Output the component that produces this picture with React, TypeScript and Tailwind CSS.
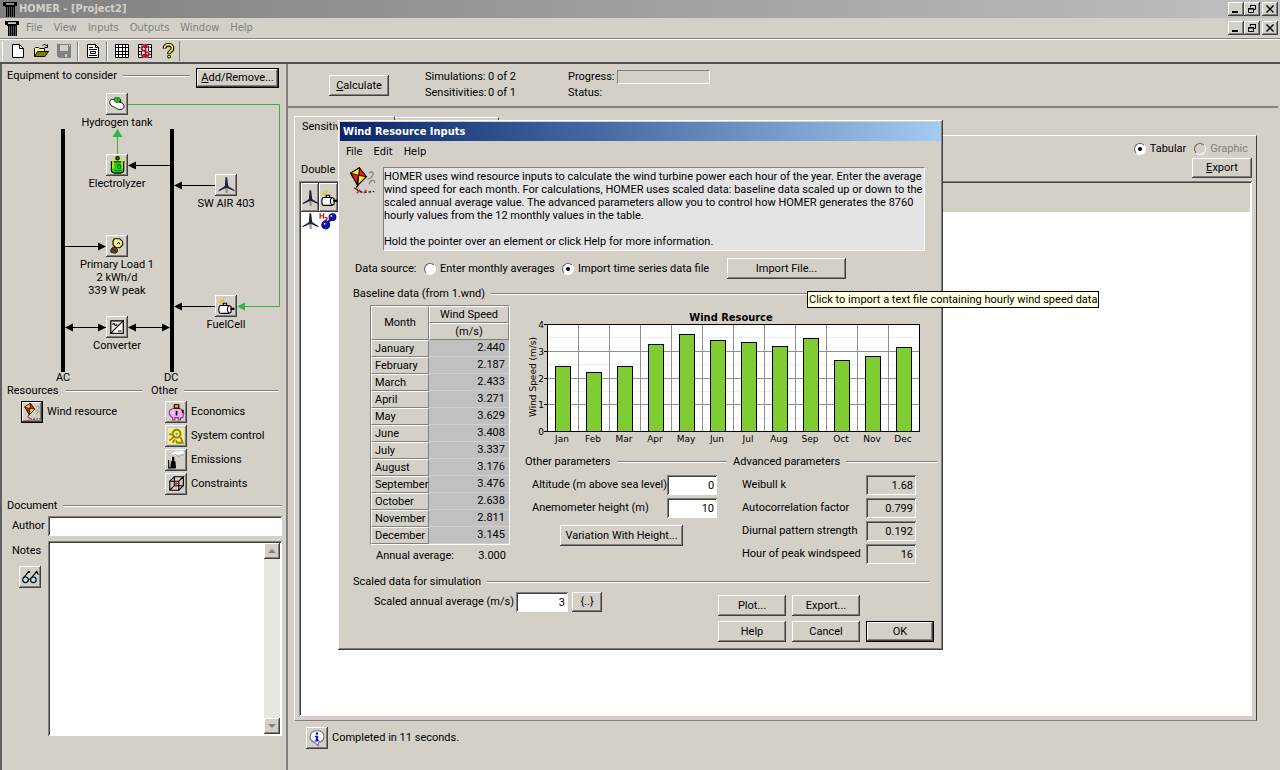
import type { ReactNode } from 'react';
import { clsx } from 'clsx';

const RAISED = 'bg-[#d4d0c8] shadow-[inset_-1px_-1px_#404040,inset_1px_1px_#ffffff,inset_-2px_-2px_#808080]';
const SUNKEN = 'shadow-[inset_1px_1px_#808080,inset_-1px_-1px_#ffffff,inset_2px_2px_#404040]';

const MONTHS = [
  { name: 'January', speed: '2.440' },
  { name: 'February', speed: '2.187' },
  { name: 'March', speed: '2.433' },
  { name: 'April', speed: '3.271' },
  { name: 'May', speed: '3.629' },
  { name: 'June', speed: '3.408' },
  { name: 'July', speed: '3.337' },
  { name: 'August', speed: '3.176' },
  { name: 'September', speed: '3.476' },
  { name: 'October', speed: '2.638' },
  { name: 'November', speed: '2.811' },
  { name: 'December', speed: '3.145' },
];

const ADVANCED = [
  { id: 'weibull', label: 'Weibull k', value: '1.68' },
  { id: 'autocorrelation', label: 'Autocorrelation factor', value: '0.799' },
  { id: 'diurnal', label: 'Diurnal pattern strength', value: '0.192' },
  { id: 'peak', label: 'Hour of peak windspeed', value: '16' },
];

/* ---------- icons ---------- */

function Icon({ size = 16, children }: { size?: number; children: ReactNode }) {
  return (
    <svg width={size} height={size} viewBox="0 0 16 16" fill="none" stroke="#000" className="shrink-0" aria-hidden="true">
      {children}
    </svg>
  );
}

function ColumnIcon() {
  return (
    <svg width="16" height="16" viewBox="0 0 16 16" shapeRendering="crispEdges" className="shrink-0" aria-hidden="true">
      <path d="M1 1h14v2H1zM1 3h3v2H1zM12 3h3v2h-3zM3 4h10v2H3zM4 6h1v10H4zM6 6h1v10H6zM8 6h1v10H8zM10 6h1v10h-1zM12 6h1v10h-1z" fill="#000" />
      <path d="M5 6h1v10H5zM7 6h1v10H7zM9 6h1v10H9zM11 6h1v10h-1z" fill="#555" />
      <path d="M4 2h8v1H4z" fill="#999" />
    </svg>
  );
}

function NewIcon() {
  return (
    <Icon>
      <path d="M2.5 1.5h7l4 4v9h-11z" fill="#fff" />
      <path d="M9.500 1.500v4h4" />
    </Icon>
  );
}

function OpenIcon() {
  return (
    <Icon>
      <path d="M1.500 13.500v-8l1-1h3l1 1h5v3" fill="#ffff99" />
      <path d="M1.500 13.500l3-5h11l-3.500 5z" fill="#808000" />
      <path d="M9.500 2.500c2-1.500 4-1 5 1.500M14.500 1.500v3h-3" />
    </Icon>
  );
}

function SaveIcon() {
  return (
    <Icon>
      <path d="M1 1h14v14H3l-2-2z" fill="#808080" stroke="none" />
      <path d="M4 2h8v6H4zM9 11h2v3H9z" fill="#d4d0c8" stroke="none" />
      <path d="M13 2h1v1h-1z" fill="#fff" stroke="none" />
    </Icon>
  );
}

function ReportIcon() {
  return (
    <Icon>
      <path d="M2.500 1.500h8l3 3v10h-11z" fill="#fff" />
      <path d="M10.500 1.500v3h3M4 4.500h4M4 6.500h8M4 12.500h8M5.500 8.500v2h5v-2z" />
    </Icon>
  );
}

function GridIcon({ money }: { money?: boolean }) {
  return (
    <Icon>
      <path d="M1.500 1.500h13v13h-13z" fill="#fff" />
      <path d="M4.500 1.500v13M8.500 1.500v13M11.500 1.500v13M1.500 4.500h13M1.500 8.500h13M1.500 11.500h13" />
      {money && (
        <>
          <path d="M12 5C11 2 4.500 2 4.500 5.500S12 8 12 11s-7 3.500-8 0" stroke="#fff" strokeWidth="2.600" />
          <path d="M12 5C11 2 4.500 2 4.500 5.500S12 8 12 11s-7 3.500-8 0M8.500 1v14" stroke="#b0102c" strokeWidth="1.800" />
        </>
      )}
    </Icon>
  );
}

function HelpIcon() {
  return (
    <Icon>
      <path d="M4.500 5.500c0-5 8-5 8 0 0 2.500-3.500 2.500-3.500 5.500" strokeWidth="3.800" />
      <path d="M4.500 5c0-4.500 8-4.500 8 .5 0 2.500-3.500 2.500-3.500 5" stroke="#f4ec3a" strokeWidth="1.700" />
      <circle cx="9" cy="13.500" r="1.500" fill="#f4ec3a" />
    </Icon>
  );
}

function TankIcon() {
  return (
    <Icon size={18}>
      <path d="M1.500 6.500c0-3 3-3 5-2l6 2.500c3 2 2 6-1.500 6-3 0-4-2-6-2.500s-3.500-2-3.500-4z" fill="#fff" strokeWidth=".8" />
      <path d="M6 2.500h4l1.500 2-2 2H7L5.500 5z" fill="#16c22a" stroke="#0a5c14" strokeWidth=".8" />
      <path d="M10 6.500l1.500-1.500" strokeWidth="1.200" />
    </Icon>
  );
}

function ElectrolyzerIcon() {
  return (
    <Icon size={18}>
      <path d="M3 5v8c0 3 11 3 11 0V5z" fill="#1fd326" />
      <path d="M3 5h11" stroke="#067c10" />
      <path d="M4.500 11V4c0-2 2-2 3-1M12.500 11V4c0-2-2-2-3-1" stroke="#e8dc1e" strokeWidth="1.400" />
      <circle cx="8.500" cy="2" r="1.500" fill="#13a81d" />
      <circle cx="10" cy="9.500" r="1.600" stroke="#055e0c" />
      <path d="M6 13h6" stroke="#067c10" />
    </Icon>
  );
}

function TurbineIcon() {
  return (
    <Icon size={18}>
      <path d="M8.500 9v6" stroke="#909090" strokeWidth="2" />
      <path d="M7.500 1h1.500l1 8h-3zM8 8.500l-6.500 4v1L8.500 10.500zM9 8.500l6.500 4v1L8.500 10.500z" fill="#1b2440" stroke="none" />
      <circle cx="8.500" cy="9" r="1.500" fill="#222" stroke="none" />
    </Icon>
  );
}

function BulbIcon() {
  return (
    <Icon size={18}>
      <path d="M5.500 1.500h5l2.500 2.500v3l-2.500 2.500H7L4.500 7V3.500z" fill="#fff36a" />
      <path d="M6.500 3.500l1.500-1" stroke="#fff" />
      <path d="M5 8.500l3.500 2.500v2l-2 1.500-4-1V11z" fill="#7a4a20" strokeWidth=".7" />
      <path d="M3.500 10.500l4 2.500M8 6.500l1.500-2 1 2" strokeWidth=".8" />
    </Icon>
  );
}

function GeneratorIcon() {
  return (
    <Icon size={18}>
      <path d="M3 2l1 2M6 1l-1 3M2 4l2 1" stroke="#d8cf00" strokeWidth="1.400" />
      <path d="M3.500 7.500h7l2 1v5l-2 1h-7c-2.500 0-2.500-7 0-7z" fill="#fff" />
      <path d="M5.500 7.500v-2h3v2M10.500 7.500c-1.500 2-1.500 5 0 7" />
      <path d="M12 10.500h3.500" strokeWidth="2" />
    </Icon>
  );
}

function ConverterIcon() {
  return (
    <Icon size={18}>
      <path d="M2.500 2.500h11v11h-11z" fill="#e4e4dc" />
      <path d="M13.500 2.500v11h-11z" fill="#fff" />
      <path d="M4 6c1-2 1.500-1 2 0s1.500 1 2-.500M9 11.500h3" />
    </Icon>
  );
}

function KiteIcon({ size = 18 }: { size?: number }) {
  return (
    <Icon size={size}>
      <path d="M6.500.500L1.500 3.500l4 7z" fill="#f01818" strokeWidth=".7" />
      <path d="M6.500.500L5.500 10.500 10.500 5.500z" fill="#ffee10" strokeWidth=".7" />
      <path d="M6.500.500l-.4 4.300 4.400.7z" fill="#f01818" strokeWidth=".5" />
      <path d="M1.500 3.500l4.600 1.300.4-4.300z" fill="#ffee10" strokeWidth=".5" />
      <path d="M12 3.500c2-1.500 3 0 2 1.500s-2 2-3 2M12 10c1-3 3-3 3.500-1" stroke="#808080" strokeWidth=".7" />
      <path d="M5.500 10.500L4.500 12l1.500 2 3 .5 6-.5" strokeDasharray="1.500 1" strokeWidth=".7" />
      <path d="M3.500 12l2 1M5 15l2-2M9 15l1.500-2" stroke="#d42020" strokeWidth=".8" />
    </Icon>
  );
}

function PiggyIcon() {
  return (
    <Icon size={18}>
      <path d="M2 8c0-4 11-5 12 0l1 1-1 4h-2v2h-2v-2H7v2H5v-2c-2-1-3-3-3-5z" fill="#f3b0ec" stroke="#8c3c91" />
      <path d="M6.500 1.500h4v3h-4z" fill="#f2c21b" />
      <path d="M8.500 7v4M14 6v3" strokeWidth="1.500" />
      <path d="M5 8v2" stroke="#fff" strokeWidth="1.500" />
    </Icon>
  );
}

function ControlIcon() {
  return (
    <Icon size={18}>
      <path d="M1 1h14v14H1z" fill="#f6f08e" stroke="none" />
      <circle cx="8.500" cy="6" r="3.500" stroke="#948600" strokeWidth="1.800" />
      <circle cx="8.500" cy="6" r="1" fill="#948600" stroke="none" />
      <path d="M2 6l2 1M2 12l4-3M5 14l2-3M12 9l2 5H9l-1-2" stroke="#948600" strokeWidth="1.600" />
    </Icon>
  );
}

function EmissionsIcon() {
  return (
    <Icon size={18}>
      <path d="M1 2c2-2 3 1 5-1s4 1 6-1 3 1 3 2l-3 2-3-1-3 2-3-2z" fill="#fff" stroke="none" />
      <path d="M1 3l2-1 2 2 3-1 2 2 3-2 2 1" stroke="#888" strokeWidth=".7" />
      <path d="M4.500 5v4h-1l-.5 6h5l-.5-6h-1V5z" fill="#000" stroke="none" />
      <path d="M1.500 8v7h6" strokeWidth="1" />
    </Icon>
  );
}

function CubeIcon() {
  return (
    <Icon size={18}>
      <path d="M2.500 5.500h8v8h-8zM2.500 5.500l4-4h8l-4 4M14.500 1.500v8l-4 4M6.500 1.500v8h8M6.500 9.500l-4 4" />
      <path d="M8 5.500v5M6 7.500h5" stroke="#c01c24" />
    </Icon>
  );
}

function GlassesIcon() {
  return (
    <Icon size={18}>
      <circle cx="4" cy="10.500" r="2.500" fill="#9ff0ee" />
      <circle cx="11" cy="10.500" r="2.500" fill="#9ff0ee" />
      <path d="M6.500 10h2M2 9l5-6 1 1M9 9l5-6 1.500 3" />
    </Icon>
  );
}

function InfoIcon() {
  return (
    <Icon size={18}>
      <path d="M8 1.500c8 0 8 9 1.500 10.500L9 15l-3-3C-.500 10 1 1.500 8 1.500z" fill="#fff" stroke="#777" />
      <path d="M7 3h2v2H7zM6 6h3v4h1v1H6v-1h1V7H6z" fill="#1414e0" stroke="none" />
    </Icon>
  );
}

function HydrogenIcon() {
  return (
    <Icon size={18}>
      <path d="M1 1v5M4 1v5M1 3.500h3M5 5h2v1.500L5 8h2" stroke="#d02020" strokeWidth="1.200" />
      <path d="M12 5L6 11" stroke="#1010b8" strokeWidth="2" />
      <circle cx="12" cy="4.500" r="3" fill="#1010b8" stroke="#101060" />
      <circle cx="6" cy="11.500" r="3.500" fill="#1010b8" stroke="#101060" />
      <circle cx="11" cy="3.500" r=".8" fill="#fff" stroke="none" />
      <circle cx="5" cy="10.500" r=".8" fill="#fff" stroke="none" />
    </Icon>
  );
}

/* ---------- shared controls ---------- */

function Button({ children, className, label }: { children: ReactNode; className?: string; label?: string }) {
  return (
    <button type="button" aria-label={label} className={clsx('flex shrink-0 items-center justify-center whitespace-nowrap', RAISED, className)}>
      {children}
    </button>
  );
}

function Heading({ children, className }: { children: ReactNode; className?: string }) {
  return (
    <div className={clsx('flex items-center gap-1.5', className)}>
      <h2 className="whitespace-nowrap">{children}</h2>
      <div className="h-0.5 flex-1 border-t border-b border-t-[#808080] border-b-white" />
    </div>
  );
}

function Radio({ name, label, checked, disabled }: { name: string; label: string; checked?: boolean; disabled?: boolean }) {
  return (
    <label className={clsx('flex items-center gap-1 whitespace-nowrap', disabled && 'text-[#808080]')}>
      <span className="grid size-3">
        <input
          type="radio"
          name={name}
          defaultChecked={checked}
          disabled={disabled}
          className={clsx(
            'peer col-start-1 row-start-1 size-3 appearance-none rounded-full border border-t-[#606060] border-r-white border-b-white border-l-[#606060]',
            disabled ? 'bg-[#d4d0c8]' : 'bg-white',
          )}
        />
        <span className="pointer-events-none col-start-1 row-start-1 hidden size-1 place-self-center rounded-full bg-black peer-checked:block" />
      </span>
      {label}
    </label>
  );
}

function WindowButtons() {
  return (
    <div className="flex">
      <Button label="Minimize" className="h-3.5 w-4">
        <svg width="10" height="10" aria-hidden="true"><path d="M1 7h6v2H1z" /></svg>
      </Button>
      <Button label="Restore" className="mr-0.5 h-3.5 w-4">
        <svg width="10" height="10" fill="none" stroke="#000" aria-hidden="true"><path d="M3.500 3.500v-2h5v4h-2M3 1.500h6M1.500 4.500h5v4h-5zM1 5h6" /></svg>
      </Button>
      <Button label="Close" className="h-3.5 w-4">
        <svg width="10" height="10" stroke="#000" strokeWidth="1.500" aria-hidden="true"><path d="M1.500 1.500l7 7M8.500 1.500l-7 7" /></svg>
      </Button>
    </div>
  );
}

function ToolButton({ label, children }: { label: string; children: ReactNode }) {
  return (
    <button type="button" aria-label={label} className="flex h-[22px] w-[23px] items-center justify-center">
      {children}
    </button>
  );
}

function ToolSeparator() {
  return <div className="mx-0.5 h-5 w-0.5 border-r border-l border-l-[#808080] border-r-white" />;
}

/* ---------- left panel ---------- */

function Node({ className, icon, lines }: { className: string; icon: ReactNode; lines: string[] }) {
  return (
    <div className={clsx('absolute flex w-24 flex-col items-center text-center leading-[13px]', className)}>
      <Button label={lines[0]} className="mb-px size-[22px]">{icon}</Button>
      {lines.map((line) => (
        <span key={line} className="whitespace-nowrap">{line}</span>
      ))}
    </div>
  );
}

function Schematic() {
  return (
    <div className="relative h-[293px]">
      <svg className="absolute top-0 left-0" width="284" height="293" fill="none" stroke="#000" aria-hidden="true">
        <path d="M61 39v243M170 39v243" strokeWidth="4" />
        <path d="M130 75.500h38M176 95.500h38M63 156.500h40M176 216.500h38M66 237.500h38M130 237.500h36" />
        <path
          d="M126 75.500l8-4v8zM172 95.500l8-4v8zM104 156.500l-8-4v8zM172 216.500l8-4v8zM63 237.500l8-4v8zM104 237.500l-8-4v8zM126 237.500l8-4v8zM168 237.500l-8-4v8z"
          fill="#000"
          stroke="none"
        />
        <path d="M126 14.500h151.500v202H240M115.500 64V45" stroke="#3dae45" />
        <path d="M115.500 39l-5 8h10zM235 216.500l8-4v8z" fill="#2fb93a" stroke="none" />
      </svg>
      <Node className="top-[3px] left-[67px]" icon={<TankIcon />} lines={['Hydrogen tank']} />
      <Node className="top-[64px] left-[67px]" icon={<ElectrolyzerIcon />} lines={['Electrolyzer']} />
      <Node className="top-[84px] left-[176px]" icon={<TurbineIcon />} lines={['SW AIR 403']} />
      <Node className="top-[145px] left-[67px]" icon={<BulbIcon />} lines={['Primary Load 1', '2 kWh/d', '339 W peak']} />
      <Node className="top-[205px] left-[176px]" icon={<GeneratorIcon />} lines={['FuelCell']} />
      <Node className="top-[226px] left-[67px]" icon={<ConverterIcon />} lines={['Converter']} />
      <span className="absolute top-[281px] left-[54px]">AC</span>
      <span className="absolute top-[281px] left-[162px]">DC</span>
    </div>
  );
}

function SideItem({ icon, label, active }: { icon: ReactNode; label: string; active?: boolean }) {
  return (
    <div className="flex items-center gap-1">
      <Button label={label} className={clsx('size-[22px]', active && 'border border-black')}>{icon}</Button>
      <span>{label}</span>
    </div>
  );
}

function Sidebar() {
  return (
    <aside className="flex w-[288px] shrink-0 flex-col border-r-2 border-l-2 border-r-[#808080] border-l-[#606060]">
      <div className="flex items-start gap-1.5 pt-1 pr-[7px] pl-[5px]">
        <Heading className="flex-1 pt-px">Equipment to consider</Heading>
        <Button className="h-5 w-[83px] border border-black">
          <span><u>A</u>dd/Remove...</span>
        </Button>
      </div>
      <div className="pt-0.5">
        <Schematic />
      </div>
      <div className="flex gap-2 pt-px pr-[7px] pl-[5px]">
        <div className="w-[136px]">
          <Heading>Resources</Heading>
          <div className="pt-[3px] pl-3.5">
            <SideItem icon={<KiteIcon />} label="Wind resource" active />
          </div>
        </div>
        <div className="flex-1">
          <Heading>Other</Heading>
          <div className="flex flex-col gap-0.5 pt-[3px] pl-3.5">
            <SideItem icon={<PiggyIcon />} label="Economics" />
            <SideItem icon={<ControlIcon />} label="System control" />
            <SideItem icon={<EmissionsIcon />} label="Emissions" />
            <SideItem icon={<CubeIcon />} label="Constraints" />
          </div>
        </div>
      </div>
      <Heading className="mt-1 pr-1 pl-[5px]">Document</Heading>
      <div className="mt-[3px] flex items-center pr-1 pl-2.5">
        <label htmlFor="author" className="w-9">Author</label>
        <input id="author" className={clsx('h-5 min-w-0 flex-1 bg-white px-1', SUNKEN)} />
      </div>
      <div className="mt-[5px] mb-[34px] flex flex-1 pr-1 pl-2.5">
        <div className="w-9 pt-[3px]">
          <label htmlFor="notes">Notes</label>
          <Button label="Preview notes" className="mt-2 ml-[7px] size-[22px]"><GlassesIcon /></Button>
        </div>
        <div className={clsx('flex min-w-0 flex-1 bg-white p-0.5', SUNKEN)}>
          <textarea id="notes" className="min-w-0 flex-1 resize-none bg-transparent outline-none" />
          <div className="flex w-4 flex-col justify-between bg-[#e9e7e3]">
            <Button label="Scroll up" className="h-4 w-4">
              <svg width="8" height="4" aria-hidden="true"><path d="M4 0l4 4H0z" fill="#808080" /></svg>
            </Button>
            <Button label="Scroll down" className="h-4 w-4">
              <svg width="8" height="4" aria-hidden="true"><path d="M4 4l4-4H0z" fill="#808080" /></svg>
            </Button>
          </div>
        </div>
      </div>
    </aside>
  );
}

/* ---------- results area ---------- */

function Results() {
  return (
    <main className="flex min-w-0 flex-1 flex-col pr-0.5">
      <div className="flex h-[44px] border-b-2 border-[#808080] pl-[41px]">
        <Button className="mt-[11px] h-[21px] w-[60px]"><span><u>C</u>alculate</span></Button>
        <dl className="ml-9 grid w-[143px] grid-cols-[63px_auto] content-start gap-y-0.5 pt-1.5">
          <dt>Simulations:</dt>
          <dd>0 of 2</dd>
          <dt>Sensitivities:</dt>
          <dd>0 of 1</dd>
        </dl>
        <div className="flex flex-col gap-0.5 pt-1.5">
          <div className="flex items-center">
            <span className="w-[49px]">Progress:</span>
            <div className="h-3.5 w-[93px] border border-t-[#808080] border-r-white border-b-white border-l-[#808080]" />
          </div>
          <span>Status:</span>
        </div>
      </div>

      <div className="mt-2 mr-[21px] ml-1.5 flex flex-1 flex-col">
        <div className="flex items-end">
          <button type="button" className="z-10 -mb-px h-5 w-[101px] border-t border-r border-l border-t-white border-r-[#404040] border-l-white bg-[#d4d0c8] pl-[7px] text-left">
            Sensitiv
          </button>
          <button type="button" aria-label="Optimization Results" className="h-[18px] w-[104px] border-t border-r border-t-white border-r-[#404040]" />
        </div>
        <section className="flex flex-1 flex-col border border-t-white border-r-[#404040] border-b-[#808080] border-l-white px-1 pb-1">
          <div className="flex items-end justify-between pt-1.5">
            <p className="pb-1 pl-0.5">Double</p>
            <div className="flex flex-col items-end">
              <div className="flex gap-2 pr-1">
                <Radio name="view" label="Tabular" checked />
                <Radio name="view" label="Graphic" disabled />
              </div>
              <Button className="mt-0.5 mb-[3px] h-5 w-[60px]"><span><u>E</u>xport</span></Button>
            </div>
          </div>
          <div className={clsx('flex-1 bg-white p-0.5', SUNKEN)}>
            <div className="flex h-[29px] bg-[#d4d0c8]">
              <div className={clsx('flex w-[18px] items-center justify-center', RAISED)}><TurbineIcon /></div>
              <div className={clsx('flex w-[19px] items-center justify-center', RAISED)}><GeneratorIcon /></div>
            </div>
            <div className="flex">
              <TurbineIcon />
              <HydrogenIcon />
            </div>
          </div>
        </section>
      </div>

      <div className="mt-1.5 mb-[21px] ml-[18px] flex items-center gap-1">
        <Button label="Messages" className="size-[22px]"><InfoIcon /></Button>
        <span>Completed in 11 seconds.</span>
      </div>
    </main>
  );
}

/* ---------- dialog ---------- */

function WindChart() {
  const left = 22;
  const top = 14;
  const height = 107;
  return (
    <svg width="400" height="138" fontFamily="'DejaVu Sans', Verdana, sans-serif" fontSize="9" role="img" aria-label="Wind Resource">
      <text x="206" y="11" textAnchor="middle" fontSize="11" fontWeight="bold" fontFamily="'DejaVu Sans Condensed', Verdana, sans-serif">Wind Resource</text>
      <text transform="translate(11 67) rotate(-90)" textAnchor="middle">Wind Speed (m/s)</text>
      <g shapeRendering="crispEdges">
        <rect x={left} y={top} width="372" height={height} fill="#fff" />
        {[0.5, 1.5, 2.5, 3.5].map((v) => (
          <path key={v} d={`M22 ${Math.round(top + height - (v * height) / 4)}h372`} stroke="#ececec" />
        ))}
        {[1, 2, 3].map((v) => (
          <path key={v} d={`M22 ${Math.round(top + height - (v * height) / 4)}h372`} stroke="#909090" />
        ))}
        {MONTHS.slice(1).map((m, i) => (
          <path key={m.name} d={`M${left + (i + 1) * 31} ${top}v${height}`} stroke="#909090" />
        ))}
        {MONTHS.map((m, i) => {
          const h = Math.round((Number(m.speed) * height) / 4);
          return <rect key={m.name} x={left + i * 31 + 8} y={top + height - h} width="15" height={h} fill="#80cc33" stroke="#000" />;
        })}
        <rect x={left} y={top} width="372" height={height} fill="none" stroke="#000" />
        {[0, 1, 2, 3, 4].map((v) => (
          <path key={v} d={`M19 ${Math.round(top + height - (v * height) / 4)}h3`} stroke="#000" />
        ))}
      </g>
      {[0, 1, 2, 3, 4].map((v) => (
        <text key={v} x="19" y={Math.round(top + height - (v * height) / 4) + 4} textAnchor="end">{v}</text>
      ))}
      {MONTHS.map((m, i) => (
        <text key={m.name} x={left + i * 31 + 15} y="132" textAnchor="middle">{m.name.slice(0, 3)}</text>
      ))}
    </svg>
  );
}

function BaselineTable() {
  const raised = 'border border-t-white border-r-[#808080] border-b-[#808080] border-l-white p-0 font-normal';
  return (
    <div className="w-[140px] shrink-0">
      <div className="border border-t-[#808080] border-r-white border-b-white border-l-[#808080]">
        <table className="w-full table-fixed border-separate border-spacing-0">
          <thead>
            <tr className="h-[17px]">
              <th rowSpan={2} className={clsx(raised, 'w-[58px]')}>Month</th>
              <th className={raised}>Wind Speed</th>
            </tr>
            <tr className="h-[17px]">
              <th className={raised}>(m/s)</th>
            </tr>
          </thead>
          <tbody>
            {MONTHS.map((m) => (
              <tr key={m.name} className="h-[17px]">
                <th className={clsx(raised, 'pl-[3px] text-left')}>{m.name}</th>
                <td className="border-b border-[#d4d0c8] bg-[#c0c0c0] p-0 pr-1 text-right">{m.speed}</td>
              </tr>
            ))}
          </tbody>
        </table>
      </div>
      <div className="mt-1 flex justify-between pr-1 pl-1.5">
        <span>Annual average:</span>
        <span>3.000</span>
      </div>
    </div>
  );
}

function Parameters() {
  return (
    <div className="flex gap-1.5 whitespace-nowrap">
      <div className="w-[202px]">
        <Heading>Other parameters</Heading>
        <div className="flex flex-col gap-[3px] pt-1.5 pr-2.5 pl-[7px]">
          <div className="flex h-5 items-center justify-between">
            <label htmlFor="altitude">Altitude (m above sea level)</label>
            <input id="altitude" defaultValue="0" className={clsx('h-5 w-[50px] bg-white px-[3px] text-right', SUNKEN)} />
          </div>
          <div className="flex h-5 items-center justify-between">
            <label htmlFor="anemometer">Anemometer height (m)</label>
            <input id="anemometer" defaultValue="10" className={clsx('h-5 w-[50px] bg-white px-[3px] text-right', SUNKEN)} />
          </div>
        </div>
        <Button className="mt-[7px] ml-[35px] h-[21px] w-[123px]">Variation With Height...</Button>
      </div>
      <div className="w-[204px]">
        <Heading>Advanced parameters</Heading>
        <div className="flex flex-col gap-[3px] pt-1.5 pr-[21px] pl-[9px]">
          {ADVANCED.map((p) => (
            <div key={p.id} className="flex h-5 items-center justify-between">
              <label htmlFor={p.id}>{p.label}</label>
              <input id={p.id} readOnly value={p.value} className={clsx('h-5 w-[50px] bg-[#d4d0c8] px-[3px] text-right', SUNKEN)} />
            </div>
          ))}
        </div>
      </div>
    </div>
  );
}

function WindDialog() {
  return (
    <div
      role="dialog"
      aria-label="Wind Resource Inputs"
      className={clsx('absolute top-[120px] left-[338px] z-20 w-[605px] p-0.5', RAISED)}
    >
      <div className="flex h-[19px] items-center bg-linear-to-r from-[#0a246a] to-[#a6caf0] pl-[3px] font-['DejaVu_Sans_Condensed',Tahoma,sans-serif] font-bold text-white">
        Wind Resource Inputs
      </div>
      <nav className="flex h-[21px] items-center gap-[11px] pl-1.5 font-['DejaVu_Sans_Condensed',Tahoma,sans-serif]">
        <button type="button">File</button>
        <button type="button">Edit</button>
        <button type="button">Help</button>
      </nav>

      <div className="flex pt-[5px] pr-4 pl-2">
        <div className="w-[35px]"><KiteIcon size={28} /></div>
        <div className="h-[84px] flex-1 border border-t-[#808080] border-r-white border-b-white border-l-[#808080] bg-[#e4e4e4] leading-[13px] whitespace-nowrap">
          <p className="pt-0.5">
            HOMER uses wind resource inputs to calculate the wind turbine power each hour of the year. Enter the average<br />
            wind speed for each month. For calculations, HOMER uses scaled data: baseline data scaled up or down to the<br />
            scaled annual average value. The advanced parameters allow you to control how HOMER generates the 8760<br />
            hourly values from the 12 monthly values in the table.
          </p>
          <p className="pt-[13px]">Hold the pointer over an element or click Help for more information.</p>
        </div>
      </div>

      <div className="mt-[7px] flex h-[21px] items-center pl-[15px]">
        <span className="w-[69px]">Data source:</span>
        <div className="w-[138px]"><Radio name="source" label="Enter monthly averages" /></div>
        <div className="w-[165px]"><Radio name="source" label="Import time series data file" checked /></div>
        <Button className="h-[21px] w-[119px]">Import File...</Button>
      </div>

      <Heading className="mt-2 pr-3 pl-[13px]">Baseline data (from 1.wnd)</Heading>
      <div className="flex gap-[15px] pt-1 pl-[30px]">
        <BaselineTable />
        <div className="pt-[5px]">
          <WindChart />
          <div className="pt-[7px]">
            <Parameters />
          </div>
        </div>
      </div>

      <Heading className="mt-[11px] pr-3 pl-[13px]">Scaled data for simulation</Heading>
      <div className="flex justify-between pt-[3px] pr-[7px] pb-1.5 pl-[34px]">
        <div className="flex h-5 items-center">
          <label htmlFor="scaled" className="w-[142px] whitespace-nowrap">Scaled annual average (m/s)</label>
          <input id="scaled" defaultValue="3" className={clsx('h-5 w-[52px] bg-white px-[3px] text-right', SUNKEN)} />
          <Button label="Sensitivity values" className="ml-1 h-5 w-[30px]">{'{..}'}</Button>
        </div>
        <div className="grid grid-cols-[68px_68px_68px] gap-x-1.5 gap-y-[5px] pt-[3px]">
          <Button className="h-[21px]">Plot...</Button>
          <Button className="col-span-2 h-[21px] w-[68px]">Export...</Button>
          <Button className="h-[21px]">Help</Button>
          <Button className="h-[21px]">Cancel</Button>
          <Button className="h-[21px] border border-black">OK</Button>
        </div>
      </div>
    </div>
  );
}

export default function App() {
  return (
    <div className="relative flex min-h-screen flex-col overflow-hidden bg-[#d4d0c8] font-['Roboto','Liberation_Sans',sans-serif] text-[11px] leading-[14px] text-black">
      <header className="font-['DejaVu_Sans_Condensed',Tahoma,sans-serif]">
        <div className="flex h-[18px] items-center bg-linear-to-r from-[#808080] to-[#c0c0c0] pr-0.5 pl-0.5">
          <ColumnIcon />
          <h1 className="flex-1 pl-px font-bold text-[#d4d0c8]">HOMER - [Project2]</h1>
          <WindowButtons />
        </div>
        <div className="flex h-5 items-center pr-0.5 pl-1 text-[#808080]">
          <ColumnIcon />
          <nav className="flex flex-1 gap-[11px] pl-1.5">
            <button type="button">File</button>
            <button type="button">View</button>
            <button type="button">Inputs</button>
            <button type="button">Outputs</button>
            <button type="button">Window</button>
            <button type="button">Help</button>
          </nav>
          <WindowButtons />
        </div>
        <div className="flex h-[26px] items-center border-t border-b-2 border-t-[#808080] border-b-[#505050] pl-0.5 shadow-[inset_0_1px_#ffffff]">
          <div className="mr-0.5 h-5 w-0.5 border-l border-white" />
          <ToolButton label="New"><NewIcon /></ToolButton>
          <ToolButton label="Open"><OpenIcon /></ToolButton>
          <ToolButton label="Save"><SaveIcon /></ToolButton>
          <ToolSeparator />
          <ToolButton label="Report"><ReportIcon /></ToolButton>
          <ToolSeparator />
          <ToolButton label="Table"><GridIcon /></ToolButton>
          <ToolButton label="Costs"><GridIcon money /></ToolButton>
          <ToolButton label="Help"><HelpIcon /></ToolButton>
          <div className="h-5 w-0.5 border-l border-[#808080]" />
        </div>
      </header>

      <div className="flex flex-1">
        <Sidebar />
        <Results />
      </div>

      <WindDialog />
      <div role="tooltip" className="absolute top-[291px] left-[807px] z-30 border border-black bg-[#ffffe1] px-px pt-px whitespace-nowrap">
        Click to import a text file containing hourly wind speed data
      </div>
    </div>
  );
}
